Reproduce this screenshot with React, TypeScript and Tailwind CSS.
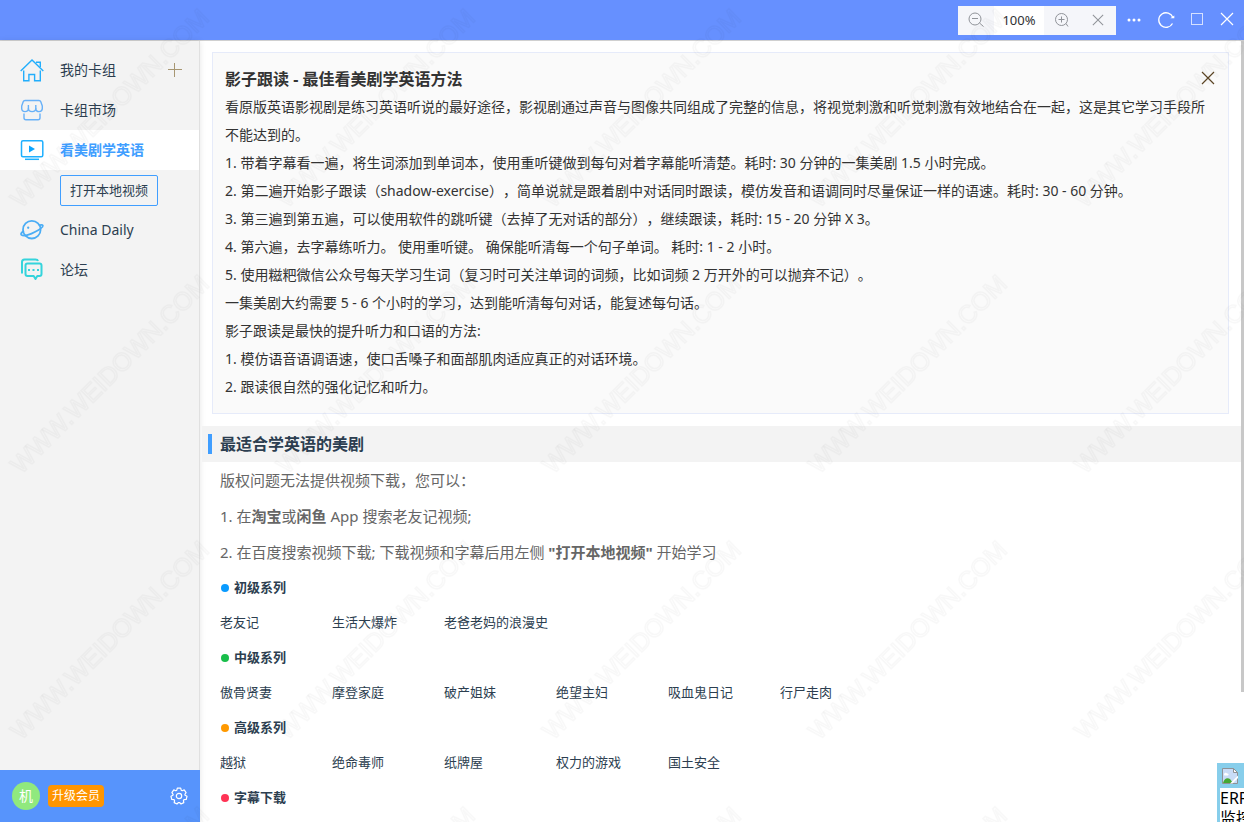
import React from "react";

const tips = [
  "看原版英语影视剧是练习英语听说的最好途径，影视剧通过声音与图像共同组成了完整的信息，将视觉刺激和听觉刺激有效地结合在一起，这是其它学习手段所不能达到的。",
  "1. 带着字幕看一遍，将生词添加到单词本，使用重听键做到每句对着字幕能听清楚。耗时: 30 分钟的一集美剧 1.5 小时完成。",
  "2. 第二遍开始影子跟读（shadow-exercise），简单说就是跟着剧中对话同时跟读，模仿发音和语调同时尽量保证一样的语速。耗时: 30 - 60 分钟。",
  "3. 第三遍到第五遍，可以使用软件的跳听键（去掉了无对话的部分），继续跟读，耗时: 15 - 20 分钟 X 3。",
  "4. 第六遍，去字幕练听力。 使用重听键。 确保能听清每一个句子单词。 耗时: 1 - 2 小时。",
  "5. 使用糍粑微信公众号每天学习生词（复习时可关注单词的词频，比如词频 2 万开外的可以抛弃不记）。",
  "一集美剧大约需要 5 - 6 个小时的学习，达到能听清每句对话，能复述每句话。",
  "影子跟读是最快的提升听力和口语的方法:",
  "1. 模仿语音语调语速，使口舌嗓子和面部肌肉适应真正的对话环境。",
  "2. 跟读很自然的强化记忆和听力。",
];

const groups = [
  { title: "初级系列", dot: "bg-[#0a9bff]", shows: ["老友记", "生活大爆炸", "老爸老妈的浪漫史"] },
  { title: "中级系列", dot: "bg-[#19be4b]", shows: ["傲骨贤妻", "摩登家庭", "破产姐妹", "绝望主妇", "吸血鬼日记", "行尸走肉"] },
  { title: "高级系列", dot: "bg-[#ff9900]", shows: ["越狱", "绝命毒师", "纸牌屋", "权力的游戏", "国土安全"] },
  { title: "字幕下载", dot: "bg-[#ff3355]", shows: [] },
];

function Cross({ className, size = 14 }: { className?: string; size?: number }) {
  return (
    <svg width={size} height={size} viewBox="0 0 14 14" fill="none" stroke="currentColor" strokeWidth="1.200" className={className} aria-hidden="true">
      <path d="M1 1 13 13M13 1 1 13" />
    </svg>
  );
}

function Magnifier({ plus = false }: { plus?: boolean }) {
  return (
    <svg width="16" height="16" viewBox="0 0 16 16" fill="none" stroke="currentColor" aria-hidden="true">
      {plus ? (
        <>
          <circle cx="7.500" cy="7.500" r="6" />
          <path d="M4.500 7.500h6M7.500 4.500v6M12 11.500l2 3" />
        </>
      ) : (
        <>
          <circle cx="7" cy="7" r="6" />
          <path d="M4 6.500h6M11.500 11l4 3.500" />
        </>
      )}
    </svg>
  );
}

function HomeIcon() {
  return (
    <svg width="24" height="24" viewBox="0 0 24 24" fill="none" stroke="#22aefc" strokeWidth="1.400" aria-hidden="true">
      <path d="M.7 13 12 2l11.300 11" />
      <path d="M16 4.300h4.300V9" />
      <path d="M3.700 12.500v10.300h5.200v-6.300h5.700v6.300h5.700V12.500" />
    </svg>
  );
}

function MarketIcon() {
  return (
    <svg width="24" height="24" viewBox="0 0 24 24" fill="none" stroke="#68b1f8" strokeWidth="1.400" strokeLinejoin="round" aria-hidden="true">
      <path d="M5 2.500h14c1 0 1.500.4 1.800 1.200L22.300 8v2.600c0 2-1.300 3-3.200 3s-3.300-1-3.300-3c0 2-1.800 3-3.700 3s-3.700-1-3.700-3c0 2-1.500 3-3.400 3S1.700 12.600 1.700 10.600V8l1.500-4.300C3.500 2.900 4 2.500 5 2.500z" />
      <path d="M8.400 7v4M15.800 7v4M4 15.500v4.300c0 1.200.6 1.900 1.900 1.900h12.200c1.300 0 1.900-.7 1.900-1.900v-4.300" />
    </svg>
  );
}

function VideoIcon() {
  return (
    <svg width="24" height="24" viewBox="0 0 24 24" fill="none" stroke="#1fb0ff" strokeWidth="1.500" aria-hidden="true">
      <rect x="1.500" y="2.700" width="21.300" height="16" rx="1.500" />
      <path d="M9 7.500v7l6-3.500z" fill="#0aa5ff" stroke="none" />
      <path d="M5 21.300h14" />
    </svg>
  );
}

function PlanetIcon() {
  return (
    <svg width="24" height="24" viewBox="0 0 24 24" fill="none" stroke="#4badf5" strokeWidth="1.800" strokeLinecap="round" strokeLinejoin="round" aria-hidden="true">
      <circle cx="11.800" cy="11.700" r="8.800" />
      <path d="M3.200 13.200C1.300 14.700.6 16 1.400 16.800c2 1.800 8.500-.2 13.400-2.800 4.500-2.300 8.600-5 8-6.500-.3-.8-1.600-.8-3-.4" />
      <path d="M8.200 9.600v.2" strokeWidth="2.200" />
    </svg>
  );
}

function ForumIcon() {
  return (
    <svg width="24" height="24" viewBox="1 1 24 24" fill="none" stroke="#35d4dc" strokeWidth="2" strokeLinejoin="round" aria-hidden="true">
      <path d="M3 16.500V5C3 3.500 3.800 2.500 5.500 2.500h11c1.400 0 2.300.6 2.500 1.500" />
      <path d="M8.500 6.500h12c1.200 0 2 .8 2 2v8.500c0 1.200-.8 2-2 2h-2.200l-1.800 3-1.800-3H8.500c-1.200 0-2-.8-2-2V8.500c0-1.200.8-2 2-2z" />
      <path d="M9 13h2M13.500 13h2M18 13h2" />
    </svg>
  );
}

function GearIcon() {
  return (
    <svg width="18" height="18" viewBox="0 0 18 18" fill="none" stroke="#fff" strokeWidth="1.200" strokeLinejoin="round" aria-hidden="true">
      <path d="M7.300 1.200h3.400l.5 2 1 .5 2-.8 1.900 2.800-1.200 1.600.2 1 1.900 1-.8 3.200-2.200.2-.6.900.4 2-2.800 1.400-1.500-1.500h-1L7 17l-2.800-1.400.4-2-.6-.9-2.200-.2L1 9.300l1.900-1 .2-1L1.900 5.700l1.900-2.800 2 .8 1-.5z" />
      <circle cx="9" cy="9" r="2.700" />
    </svg>
  );
}

function BrokenImage() {
  return (
    <svg width="18" height="18" viewBox="0 0 18 18" role="img" aria-label="ERP">
      <path d="M1.500 1.500h11l4 4v11h-15z" fill="#c9dcf7" stroke="#8f9296" />
      <path d="M3 7.500c0-2 2.500-2.500 3-1 1.500-.5 2.300 1.500.8 2H4c-.6 0-1-.4-1-1z" fill="#fff" />
      <path d="M2 16c1-4 4-6 7-4l3 4z" fill="#45a832" />
      <path d="M12.500 1.500v4h4z" fill="#fff" stroke="#8f9296" />
      <path d="M17 8.500 9 16.500h2.500L17 11z" fill="#fff" />
    </svg>
  );
}

function Watermark() {
  return (
    <svg className="pointer-events-none absolute inset-0 z-20 h-full w-full" aria-hidden="true">
      <defs>
        <pattern id="mark" x="-20" y="-10" width="266" height="266" patternUnits="userSpaceOnUse">
          <text
            transform="translate(41 219) rotate(-45)"
            fill="none"
            stroke="#000"
            strokeOpacity="0.028"
            strokeWidth="1.500"
            fontSize="25"
            fontFamily="Liberation Sans, sans-serif"
          >
            WWW.WEIDOWN.COM
          </text>
        </pattern>
      </defs>
      <rect width="100%" height="100%" fill="url(#mark)" />
    </svg>
  );
}

function NavItem({ icon, label, active = false }: { icon: React.ReactNode; label: string; active?: boolean }) {
  return (
    <a
      href="#"
      className={
        active
          ? "flex h-10 flex-1 items-center gap-4 bg-white pl-5 font-bold text-[#409eff]"
          : "flex h-10 flex-1 items-center gap-4 pl-5 text-[#2c3e50]"
      }
    >
      {icon}
      {label}
    </a>
  );
}

export default function App() {
  return (
    <div className="relative flex h-screen flex-col overflow-hidden bg-white font-['Noto_Sans','Noto_Sans_CJK_SC',sans-serif] text-sm text-[#2c3e50] [text-spacing-trim:space-all]">
      <header className="flex h-10 shrink-0 items-center justify-end bg-[#6690ff] pr-[10px] text-white">
        <div className="flex h-[29px] items-stretch bg-[#f5f6fa] text-[#909399]">
          <button aria-label="缩小" className="flex w-9 items-center justify-center"><Magnifier /></button>
          <span className="flex w-[50px] items-center justify-center bg-white text-[13px] text-[#303133]">100%</span>
          <button aria-label="放大" className="flex w-9 items-center justify-center"><Magnifier plus /></button>
          <button aria-label="重置缩放" className="flex w-9 items-center justify-center"><Cross size={12} /></button>
        </div>
        <button aria-label="更多" className="flex w-9 justify-center">
          <svg width="14" height="4" viewBox="0 0 14 4" fill="#fff" aria-hidden="true">
            <circle cx="2" cy="2" r="1.500" /><circle cx="7" cy="2" r="1.500" /><circle cx="12" cy="2" r="1.500" />
          </svg>
        </button>
        <button aria-label="刷新" className="flex w-7 justify-center">
          <svg width="18" height="18" viewBox="0 0 18 18" fill="none" stroke="#fff" strokeWidth="1.300" aria-hidden="true">
            <path d="M15.500 12.500A7.300 7.300 0 1 1 15.900 6.500" />
            <path d="M13.300 7.300h4v-2.800z" fill="#fff" stroke="none" />
          </svg>
        </button>
        <button aria-label="最大化" className="flex w-8 justify-center pb-0.5 pl-0.5">
          <svg width="14" height="14" viewBox="0 0 14 14" fill="none" stroke="#d5e0ff" aria-hidden="true"><rect x="1.500" y="1.500" width="11" height="11" /></svg>
        </button>
        <button aria-label="关闭" className="flex w-[22px] justify-end pb-0.5"><Cross className="text-white" /></button>
      </header>

      <div className="flex min-h-0 flex-1 border-t border-[#d0d0d0]">
        <aside className="flex w-[200px] shrink-0 flex-col border-r border-[#e0e0e0] bg-[#f3f3f3] shadow-[0_0_6px_rgba(0,0,0,0.1)]">
          <nav className="flex flex-1 flex-col pt-[9px]">
            <div className="flex items-center">
              <NavItem icon={<HomeIcon />} label="我的卡组" />
              <button aria-label="添加" className="mr-4 text-[#a79672]">
                <svg width="16" height="16" viewBox="0 0 16 16" fill="none" stroke="currentColor" aria-hidden="true"><path d="M1 7.500h14M7.500 1v14" /></svg>
              </button>
            </div>
            <div className="flex"><NavItem icon={<MarketIcon />} label="卡组市场" /></div>
            <div className="flex"><NavItem icon={<VideoIcon />} label="看美剧学英语" active /></div>
            <div className="flex h-10 items-center pl-[60px]">
              <button className="h-[31px] rounded-xs border border-[#409eff] px-[9px] text-[13px]">打开本地视频</button>
            </div>
            <div className="flex"><NavItem icon={<PlanetIcon />} label="China Daily" /></div>
            <div className="flex"><NavItem icon={<ForumIcon />} label="论坛" /></div>
          </nav>
          <footer className="-mr-px flex h-[52px] items-center gap-2 bg-[#5794fc] px-3 text-white">
            <span className="flex size-7 items-center justify-center rounded-full bg-[#90e97e]">机</span>
            <a href="#" className="flex h-[22px] items-center rounded-sm bg-[#ff9500] px-1 text-xs">升级会员</a>
            <button aria-label="设置" className="ml-auto"><GearIcon /></button>
          </footer>
        </aside>

        <main className="relative min-w-0 flex-1 overflow-hidden">
          <div className="h-full overflow-y-auto pr-[3px] pt-[11px] [scrollbar-width:none]">
            <section className="relative mb-3 ml-3 mr-3 border border-[#e6ebfa] bg-[#fafafa] px-3 py-3 leading-7 text-[#333]">
              <h1 className="text-base leading-7 font-bold">影子跟读 - 最佳看美剧学英语方法</h1>
              {tips.map((tip) => <p key={tip}>{tip}</p>)}
              <button aria-label="关闭提示" className="absolute right-[13px] top-[18px] text-[#5c4524]"><Cross /></button>
            </section>

            <section className="ml-0.5">
              <h2 className="flex h-9 items-center gap-2 bg-[#f3f3f3] pl-1.5 text-base font-bold">
                <span className="h-5 w-1 bg-[#409eff]" />
                最适合学英语的美剧
              </h2>
              <div className="pl-[18px]">
                <div className="text-[15px] leading-9 text-[#666]">
                  <p>版权问题无法提供视频下载，您可以：</p>
                  <p>1. 在<b>淘宝</b>或<b>闲鱼</b> App 搜索老友记视频;</p>
                  <p>2. 在百度搜索视频下载; 下载视频和字幕后用左侧 <b>"打开本地视频"</b> 开始学习</p>
                </div>
                {groups.map((g) => (
                  <div key={g.title} className="text-[13px] leading-[35px]">
                    <h3 className="flex items-center gap-[5px] pl-px font-bold">
                      <span className={`size-2 rounded-full ${g.dot}`} />
                      {g.title}
                    </h3>
                    <ul className="flex flex-wrap">
                      {g.shows.map((s) => <li key={s} className="w-28"><a href="#">{s}</a></li>)}
                    </ul>
                  </div>
                ))}
              </div>
            </section>
          </div>
          <div className="absolute right-0 top-0 h-5/6 w-[3px] bg-[#c8c8c8]" />
        </main>
      </div>

      <Watermark />

      <aside className="absolute bottom-0 right-0 z-30 h-[59px] w-[27px] overflow-hidden border-l-3 border-[#87ceeb] bg-white text-base leading-5 whitespace-nowrap text-black">
        <div className="flex h-[25px] items-center bg-[#87ceeb] pl-px"><BrokenImage /></div>
        <div>ERP</div>
        <div>监控</div>
      </aside>
    </div>
  );
}
